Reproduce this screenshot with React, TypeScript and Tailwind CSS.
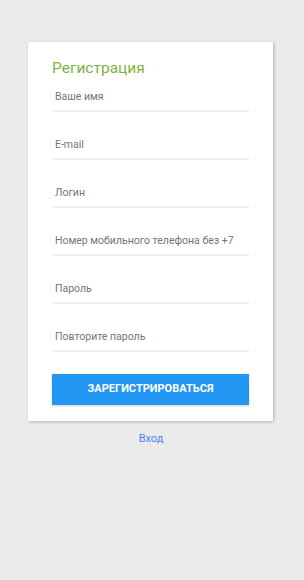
import React from "react";

const fields = [
  "Ваше имя",
  "E-mail",
  "Логин",
  "Номер мобильного телефона без +7",
  "Пароль",
  "Повторите пароль",
];

function App() {
  return (
    <div className="min-h-[580px] bg-[#ebebeb] pt-[42px] font-['Roboto',sans-serif]">
      <div className="ml-[28px] w-[245px] bg-white px-[24px] pb-[16px] pt-[16px] shadow-[1px_1px_3px_rgba(0,0,0,0.25)]">
        <h1 className="text-[15.5px] leading-[21px] text-[#7cb342]">Регистрация</h1>
        <form className="flex flex-col">
          {fields.map((f, i) => (
            <div
              key={f}
              className={
                "flex h-[33px] items-end border-b-2 border-[#f0f0f0] pb-[6px] pl-[3px] " +
                (i > 0 ? "mt-[15px]" : "mt-[0px]")
              }
            >
              <input
                type="text"
                placeholder={f}
                className="w-full bg-transparent text-[10.5px] leading-[14px] text-[#555] outline-none placeholder:text-[#757575]"
              />
            </div>
          ))}
          <button
            type="submit"
            className="mt-[22px] h-[31px] bg-[#2196f3] text-[11px] font-bold text-white shadow-[0_1px_2px_rgba(0,0,0,0.2)]"
          >
            ЗАРЕГИСТРИРОВАТЬСЯ
          </button>
        </form>
      </div>
      <div className="mt-[4px] w-[304px] pr-[2px] text-center">
        <a href="#" className="text-[11px] text-[#4a86e8]">
          Вход
        </a>
      </div>
    </div>
  );
}

export default App;
